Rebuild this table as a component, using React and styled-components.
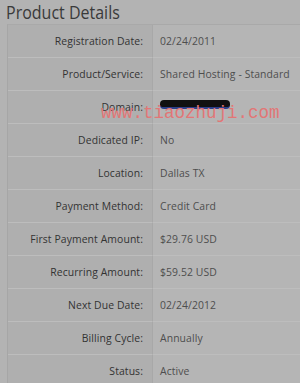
import React from 'react';
import styled, { createGlobalStyle } from 'styled-components';

const GlobalStyle = createGlobalStyle`
  html, body {
    margin: 0;
    padding: 0;
    background: #b3b3b3;
  }
`;

const Page = styled.div`
  position: relative;
  width: 300px;
  height: 383px;
  overflow: hidden;
  background: #b3b3b3;
  font-family: "Open Sans", "Liberation Sans", sans-serif;
`;

const Title = styled.h2`
  margin: 0;
  padding: 1px 0 0 6px;
  height: 24px;
  box-sizing: border-box;
  font-size: 16px;
  font-weight: 400;
  color: #3a3a3a;
  line-height: 22px;
  transform: scaleY(1.08);
  transform-origin: left top;
`;

const Table = styled.div`
  margin-left: 7px;
  border-top: 1px solid #a9a9a9;
  border-left: 1px solid #a6a6a6;
  display: grid;
  grid-template-columns: 145px 1fr;
`;

const Cell = styled.div`
  height: 33px;
  box-sizing: border-box;
  border-bottom: 1px solid #bdbdbd;
  display: flex;
  align-items: center;
  font-size: 10.4px;
  background: ${({ $label }) => ($label ? '#afafaf' : '#b5b5b5')};
  color: ${({ $label }) => ($label ? '#333' : '#4e4e4e')};
  justify-content: ${({ $label }) => ($label ? 'flex-end' : 'flex-start')};
  padding: ${({ $label }) => ($label ? '0 9px 0 0' : '0 0 0 7px')};
  border-right: ${({ $label }) => ($label ? '1px solid #a8a8a8' : 'none')};
  letter-spacing: 0.1px;
`;

const Redacted = styled.span`
  display: inline-block;
  width: 70px;
  height: 7px;
  margin-top: -5px;
  border-radius: 4px;
  background: #111;
  border-bottom: 2px solid #2b3f8a;
`;

const Watermark = styled.div`
  position: absolute;
  left: 101px;
  top: 105px;
  font-family: "Liberation Mono", "DejaVu Sans Mono", monospace;
  font-size: 17.5px;
  line-height: 1;
  color: #e27676;
  pointer-events: none;
`;

const rows = [
  ['Registration Date:', '02/24/2011'],
  ['Product/Service:', 'Shared Hosting - Standard'],
  ['Domain:', null],
  ['Dedicated IP:', 'No'],
  ['Location:', 'Dallas TX'],
  ['Payment Method:', 'Credit Card'],
  ['First Payment Amount:', '$29.76 USD'],
  ['Recurring Amount:', '$59.52 USD'],
  ['Next Due Date:', '02/24/2012'],
  ['Billing Cycle:', 'Annually'],
  ['Status:', 'Active'],
];

export default function App() {
  return (
    <Page>
      <GlobalStyle />
      <Title>Product Details</Title>
      <Table>
        {rows.map(([label, value]) => (
          <React.Fragment key={label}>
            <Cell $label>{label}</Cell>
            <Cell>{value === null ? <Redacted /> : value}</Cell>
          </React.Fragment>
        ))}
      </Table>
      <Watermark>www.tiaozhuji.com</Watermark>
    </Page>
  );
}
